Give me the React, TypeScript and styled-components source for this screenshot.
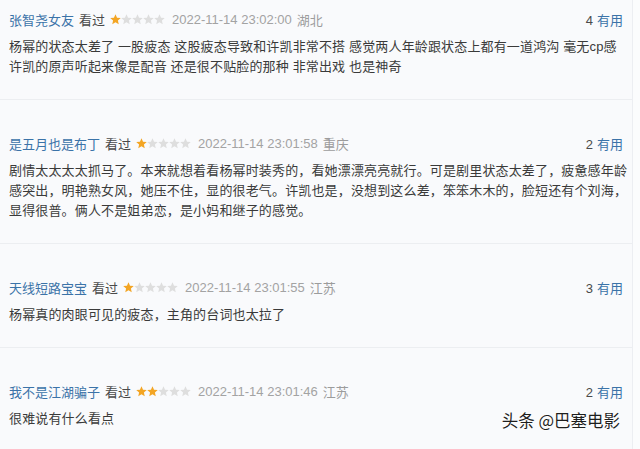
import React from "react";
import styled, { createGlobalStyle } from "styled-components";

const GlobalStyle = createGlobalStyle`
  html, body {
    margin: 0;
    padding: 0;
    background: #fbfcfd;
  }
  body {
    font-family: "Liberation Sans", "Noto Sans CJK SC", sans-serif;
  }
`;

const Page = styled.div`
  position: relative;
  width: 632px;
  height: 449px;
  overflow: hidden;
  background: #f9fafc;
  border-right: 1px solid #eceef2;
`;

const Item = styled.div`
  padding: 33px 9px 22px 9px;
  border-bottom: 1px solid #eceef1;
  &:first-child {
    padding-top: 9px;
  }
`;

const Header = styled.div`
  display: flex;
  align-items: center;
  height: 20px;
  font-size: 13px;
  margin-bottom: 8px;
`;

const UserName = styled.span`
  color: #3b73a8;
  margin-right: 5px;
`;

const Watched = styled.span`
  color: #4a4a4a;
  margin-right: 5px;
`;

const Stars = styled.span`
  display: inline-flex;
  margin-right: 7px;
`;

const Time = styled.span`
  color: #a3a3a3;
  margin-right: 5px;
`;

const Place = styled.span`
  color: #9c9c9c;
`;

const Useful = styled.span`
  margin-left: auto;
  color: #4a4a4a;
  span {
    color: #3b73a8;
    margin-left: 4px;
  }
`;

const Content = styled.p`
  margin: 0;
  font-size: 13px;
  letter-spacing: 0.15px;
  line-height: 20px;
  color: #3a3a3a;
  white-space: nowrap;
`;

const Watermark = styled.div`
  position: absolute;
  right: 12px;
  bottom: 17px;
  font-size: 16.5px;
  font-family: "Noto Sans CJK SC", sans-serif;
  color: #1e1e1e;
  text-shadow: 0 0 2px #fff, 0 0 2px #fff, 0 0 1px #fff;
`;

const Star: React.FC<{ on: boolean }> = ({ on }) => (
  <svg width="11" height="11" viewBox="1.5 1.5 21 21">
    <path
      d="M12 2l2.9 6.6 7.1.6-5.4 4.7 1.6 7-6.2-3.7-6.2 3.7 1.6-7L1.9 9.2 9 8.6z"
      fill={on ? "#f3a524" : "#dedede"}
    />
  </svg>
);

interface IComment {
  user: string;
  rating: number;
  time: string;
  place: string;
  useful: number;
  lines: string[];
}

const comments: IComment[] = [
  {
    user: "张智尧女友",
    rating: 1,
    time: "2022-11-14 23:02:00",
    place: "湖北",
    useful: 4,
    lines: [
      "杨幂的状态太差了 一股疲态 这股疲态导致和许凯非常不搭 感觉两人年龄跟状态上都有一道鸿沟 毫无cp感",
      "许凯的原声听起来像是配音 还是很不贴脸的那种 非常出戏 也是神奇",
    ],
  },
  {
    user: "是五月也是布丁",
    rating: 1,
    time: "2022-11-14 23:01:58",
    place: "重庆",
    useful: 2,
    lines: [
      "剧情太太太太抓马了。本来就想着看杨幂时装秀的，看她漂漂亮亮就行。可是剧里状态太差了，疲惫感年龄",
      "感突出，明艳熟女风，她压不住，显的很老气。许凯也是，没想到这么差，笨笨木木的，脸短还有个刘海，",
      "显得很普。俩人不是姐弟恋，是小妈和继子的感觉。",
    ],
  },
  {
    user: "天线短路宝宝",
    rating: 1,
    time: "2022-11-14 23:01:55",
    place: "江苏",
    useful: 3,
    lines: ["杨幂真的肉眼可见的疲态，主角的台词也太拉了"],
  },
  {
    user: "我不是江湖骗子",
    rating: 2,
    time: "2022-11-14 23:01:46",
    place: "江苏",
    useful: 2,
    lines: ["很难说有什么看点"],
  },
];

const App: React.FC = () => {
  return (
    <Page>
      <GlobalStyle />
      {comments.map((c) => (
        <Item key={c.user}>
          <Header>
            <UserName>{c.user}</UserName>
            <Watched>看过</Watched>
            <Stars>
              {[0, 1, 2, 3, 4].map((i) => (
                <Star key={i} on={i < c.rating} />
              ))}
            </Stars>
            <Time>{c.time}</Time>
            <Place>{c.place}</Place>
            <Useful>
              {c.useful}
              <span>有用</span>
            </Useful>
          </Header>
          <Content>
            {c.lines.map((l, i) => (
              <React.Fragment key={i}>
                {i > 0 && <br />}
                {l}
              </React.Fragment>
            ))}
          </Content>
        </Item>
      ))}
      <Watermark>头条 @巴塞电影</Watermark>
    </Page>
  );
};

export default App;
